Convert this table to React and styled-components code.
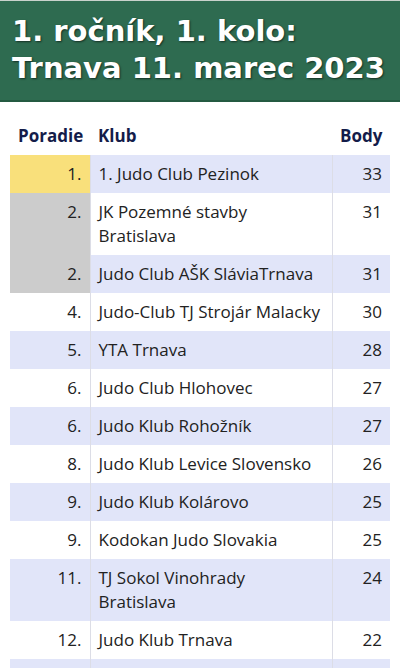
import React from "react";
import styled, { createGlobalStyle } from "styled-components";

const GlobalStyle = createGlobalStyle`
  body {
    margin: 0;
    background: #fff;
    font-family: "Open Sans", "Liberation Sans", sans-serif;
  }
`;

const rows = [
  { rank: "1.", club: "1. Judo Club Pezinok", points: 33, medal: "gold" },
  { rank: "2.", club: "JK Pozemné stavby Bratislava", points: 31, medal: "silver" },
  { rank: "2.", club: "Judo Club AŠK SláviaTrnava", points: 31, medal: "silver" },
  { rank: "4.", club: "Judo-Club TJ Strojár Malacky", points: 30 },
  { rank: "5.", club: "YTA Trnava", points: 28 },
  { rank: "6.", club: "Judo Club Hlohovec", points: 27 },
  { rank: "6.", club: "Judo Klub Rohožník", points: 27 },
  { rank: "8.", club: "Judo Klub Levice Slovensko", points: 26 },
  { rank: "9.", club: "Judo Klub Kolárovo", points: 25 },
  { rank: "9.", club: "Kodokan Judo Slovakia", points: 25 },
  { rank: "11.", club: "TJ Sokol Vinohrady Bratislava", points: 24 },
  { rank: "12.", club: "Judo Klub Trnava", points: 22 },
  { rank: "13.", club: "Judo Klub Komárno", points: 20 },
];

const medalColors = {
  gold: "#f9e07b",
  silver: "#cccccc",
};

export default function App() {
  return (
    <>
      <GlobalStyle />
      <Banner>
        <Title>
          1. ročník, 1. kolo:
          <br />
          Trnava 11. marec 2023
        </Title>
      </Banner>
      <Results>
        <colgroup>
          <col style={{ width: 80 }} />
          <col style={{ width: 242 }} />
          <col style={{ width: 58 }} />
        </colgroup>
        <thead>
          <tr>
            <HeadCell $align="right">Poradie</HeadCell>
            <HeadCell>Klub</HeadCell>
            <HeadCell $align="right">Body</HeadCell>
          </tr>
        </thead>
        <tbody>
          {rows.map((r, i) => (
            <Row key={i} $striped={i % 2 === 0}>
              <RankCell $medal={r.medal}>{r.rank}</RankCell>
              <ClubCell>{r.club}</ClubCell>
              <PointsCell>{r.points}</PointsCell>
            </Row>
          ))}
        </tbody>
      </Results>
    </>
  );
}

const Banner = styled.header`
  background: #2e6b50;
  border-top: 1px solid #c9d2cc;
  border-bottom: 2px solid #245a41;
  padding: 12px 12px 13px;
`;

const Title = styled.h1`
  margin: 0;
  color: #fff;
  font-family: "DejaVu Sans", Verdana, sans-serif;
  font-weight: bold;
  font-size: 29px;
  line-height: 37px;
  text-shadow: 1px 1px 2px rgba(0, 0, 0, 0.55);
`;

const Results = styled.table`
  margin: 15px 10px 0;
  width: 380px;
  table-layout: fixed;
  border-collapse: collapse;
  font-size: 17px;
  color: #222;
`;

const HeadCell = styled.th`
  text-align: ${(p) => p.$align || "left"};
  padding: 7px 8px;
  line-height: 24px;
  font-size: 17px;
  font-weight: 700;
  color: #141c4a;
`;

const Row = styled.tr`
  background: ${(p) => (p.$striped ? "#e1e5f9" : "#fff")};
`;

const Cell = styled.td`
  vertical-align: top;
  padding: 7px 8px;
  line-height: 24px;
`;

const RankCell = styled(Cell)`
  text-align: right;
  border-right: 1px solid #dcdde6;
  ${(p) => p.$medal && `background: ${medalColors[p.$medal]};`}
`;

const ClubCell = styled(Cell)`
  border-right: 1px solid #dcdde6;
`;

const PointsCell = styled(Cell)`
  text-align: right;
`;
